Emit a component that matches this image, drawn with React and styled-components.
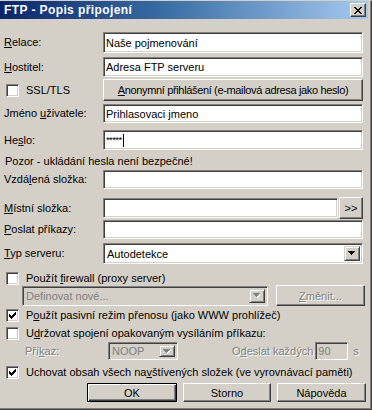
import React from "react";
import styled, { createGlobalStyle, css } from "styled-components";

const GlobalStyle = createGlobalStyle`
  html, body {
    margin: 0;
    padding: 0;
    background: #d4d0c8;
  }
  body {
    font-family: "Liberation Sans", Arial, sans-serif;
    font-size: 11px;
    color: #000;
  }
`;

const Window = styled.div`
  width: 372px;
  height: 410px;
  box-sizing: border-box;
  background: #d4d0c8;
  border-top: 1px solid #d4d0c8;
  border-right: 1px solid #404040;
  border-bottom: 1px solid #404040;
  box-shadow: inset -1px -1px #808080;
  padding-right: 2px;
  display: flex;
  flex-direction: column;
  overflow: hidden;
`;

const TitleBar = styled.div`
  height: 18px;
  margin-right: 1px;
  display: flex;
  align-items: center;
  justify-content: space-between;
  padding: 0 2px 0 4px;
  background: linear-gradient(to right, #0a246a 0%, #3a6ea5 45%, #a6caf0 100%);
`;

const TitleText = styled.span`
  color: #fff;
  font-weight: bold;
  font-size: 12px;
  letter-spacing: 0.4px;
`;

const CloseButton = styled.div`
  width: 16px;
  height: 14px;
  box-sizing: border-box;
  background: #d4d0c8;
  border: 1px solid;
  border-color: #fff #404040 #404040 #fff;
  box-shadow: inset -1px -1px #808080;
  display: flex;
  align-items: center;
  justify-content: center;
`;

const Body = styled.div`
  padding: 13px 6px 0 4px;
  display: flex;
  flex-direction: column;
`;

const FieldRow = styled.div`
  display: grid;
  grid-template-columns: 99px 1fr;
  align-items: center;
  height: ${(p) => p.$h}px;
  margin-top: ${(p) => p.$mt}px;
`;

const Label = styled.span`
  line-height: 13px;
  white-space: nowrap;
  ${(p) =>
    p.$disabled &&
    css`
      color: #808080;
      text-shadow: 1px 1px #fff;
    `}
`;

const Acc = styled.span`
  text-decoration: underline;
  text-underline-offset: 1px;
`;

const TextBox = styled.div`
  height: ${(p) => p.$h || 20}px;
  width: ${(p) => (p.$w ? `${p.$w}px` : "auto")};
  box-sizing: border-box;
  background: ${(p) => (p.$disabled ? "#d4d0c8" : "#fff")};
  color: ${(p) => (p.$disabled ? "#808080" : "#000")};
  border: 1px solid;
  border-color: #808080 #fff #fff #808080;
  box-shadow: inset 1px 1px #404040, inset -1px -1px #d4d0c8;
  padding: 0 2px;
  display: flex;
  align-items: center;
  white-space: nowrap;
  overflow: hidden;
  flex: ${(p) => (p.$grow ? 1 : "none")};
`;

const Stars = styled.span`
  font-size: 9.5px;
  letter-spacing: -0.6px;
  margin-top: -2px;
`;

const Caret = styled.span`
  display: inline-block;
  width: 1px;
  height: 13px;
  background: #000;
  margin-left: 1px;
`;

const WinButton = styled.div`
  height: ${(p) => p.$h || 19}px;
  width: ${(p) => (p.$w ? `${p.$w}px` : "auto")};
  box-sizing: border-box;
  background: #d4d0c8;
  display: flex;
  align-items: center;
  justify-content: center;
  white-space: nowrap;
  border: 1px solid;
  border-color: #fff #404040 #404040 #fff;
  box-shadow: inset -1px -1px #808080;
  color: ${(p) => (p.$disabled ? "#808080" : "#000")};
  text-shadow: ${(p) => (p.$disabled ? "1px 1px #fff" : "none")};
  ${(p) =>
    p.$default &&
    css`
      border-color: #000;
      box-shadow: inset 1px 1px #fff, inset -1px -1px #404040,
        inset -2px -2px #808080;
    `}
`;

const AnonText = styled.span`
  letter-spacing: -0.35px;
`;

const CheckRow = styled.label`
  display: flex;
  align-items: center;
  gap: 7px;
  height: ${(p) => p.$h || 14}px;
  margin-top: ${(p) => p.$mt}px;
  padding-left: 2px;
  white-space: nowrap;
  line-height: 13px;
`;

const Box = styled.span`
  width: 13px;
  height: 13px;
  box-sizing: border-box;
  flex: none;
  background: #fff;
  border: 1px solid;
  border-color: #808080 #fff #fff #808080;
  box-shadow: inset 1px 1px #404040, inset -1px -1px #d4d0c8;
  display: flex;
  align-items: center;
  justify-content: center;
`;

const SslCell = styled.div`
  display: flex;
  align-items: center;
  gap: 7px;
  padding-left: 2px;
`;

const Combo = styled.div`
  height: ${(p) => p.$h || 21}px;
  width: ${(p) => (p.$w ? `${p.$w}px` : "auto")};
  box-sizing: border-box;
  background: ${(p) => (p.$disabled ? "#d4d0c8" : "#fff")};
  color: ${(p) => (p.$disabled ? "#808080" : "#000")};
  border: 1px solid;
  border-color: #808080 #fff #fff #808080;
  box-shadow: inset 1px 1px #404040, inset -1px -1px #d4d0c8;
  padding: 2px;
  display: flex;
  align-items: stretch;
  flex: none;
`;

const ComboText = styled.span`
  flex: 1;
  display: flex;
  align-items: center;
  padding-left: 1px;
  white-space: nowrap;
`;

const DropButton = styled.span`
  width: 16px;
  box-sizing: border-box;
  background: #d4d0c8;
  border: 1px solid;
  border-color: #d4d0c8 #404040 #404040 #d4d0c8;
  box-shadow: inset 1px 1px #fff, inset -1px -1px #808080;
  display: flex;
  align-items: center;
  justify-content: center;
`;

const Notice = styled.div`
  height: 14px;
  margin-top: 4px;
  line-height: 14px;
  padding-left: 1px;
`;

const InlineField = styled.div`
  display: flex;
  align-items: center;
  gap: 1px;
`;

const ProxyRow = styled.div`
  display: flex;
  align-items: center;
  height: 21px;
  padding-left: 18px;
  margin-right: -3px;
  gap: 8px;
`;

const KeepRow = styled.div`
  display: flex;
  align-items: center;
  height: 18px;
  margin-top: 2px;
  padding-left: 21px;
`;

const KeepLabel = styled(Label)`
  width: 83px;
  flex: none;
`;

const Spacer = styled.span`
  width: ${(p) => p.$w}px;
  flex: none;
`;

const ButtonBar = styled.div`
  display: flex;
  justify-content: flex-end;
  gap: 6px;
  margin-top: 4px;
  margin-right: -3px;
`;

const CheckMark = () => (
  <svg width="7" height="7" viewBox="0 0 7 7" shapeRendering="crispEdges">
    <path
      d="M6 0h1v1h-1zM5 1h2v1h-2zM0 2h1v1h-1zM4 2h3v1h-3zM0 3h2v1h-2zM3 3h3v1h-3zM0 4h5v1h-5zM1 5h3v1h-3zM2 6h1v1h-1z"
      fill="#000"
    />
  </svg>
);

const Arrow = ({ disabled }) => (
  <svg width="8" height="5" viewBox="0 0 8 5" shapeRendering="crispEdges">
    {disabled && (
      <path d="M1 1h7v1h-7zM2 2h5v1h-5zM3 3h3v1h-3zM4 4h1v1h-1z" fill="#fff" />
    )}
    <path
      d="M0 0h7v1h-7zM1 1h5v1h-5zM2 2h3v1h-3zM3 3h1v1h-1z"
      fill={disabled ? "#808080" : "#000"}
    />
  </svg>
);

const CloseGlyph = () => (
  <svg width="8" height="7" viewBox="0 0 8 7" shapeRendering="crispEdges">
    <path
      d="M0 0h2v1h-2zM6 0h2v1h-2zM1 1h2v1h-2zM5 1h2v1h-2zM2 2h4v1h-4zM3 3h2v1h-2zM2 4h4v1h-4zM1 5h2v1h-2zM5 5h2v1h-2zM0 6h2v1h-2zM6 6h2v1h-2z"
      fill="#000"
    />
  </svg>
);

const Check = ({ checked }) => <Box>{checked && <CheckMark />}</Box>;

export default function App() {
  return (
    <>
      <GlobalStyle />
      <Window>
        <TitleBar>
          <TitleText>FTP - Popis připojení</TitleText>
          <CloseButton>
            <CloseGlyph />
          </CloseButton>
        </TitleBar>

        <Body>
          <FieldRow $h={21} $mt={0}>
            <Label>
              <Acc>R</Acc>elace:
            </Label>
            <TextBox $h={21}>Naše pojmenování</TextBox>
          </FieldRow>

          <FieldRow $h={20} $mt={4}>
            <Label>
              <Acc>H</Acc>ostitel:
            </Label>
            <TextBox>Adresa FTP serveru</TextBox>
          </FieldRow>

          <FieldRow $h={22} $mt={2}>
            <SslCell>
              <Check />
              <span>SSL/TLS</span>
            </SslCell>
            <WinButton $h={22}>
              <AnonText>
                <Acc>A</Acc>nonymní přihlášení (e-mailová adresa jako heslo)
              </AnonText>
            </WinButton>
          </FieldRow>

          <FieldRow $h={19} $mt={3}>
            <Label>
              Jméno <Acc>u</Acc>živatele:
            </Label>
            <TextBox $h={19}>Prihlasovaci jmeno</TextBox>
          </FieldRow>

          <FieldRow $h={20} $mt={7}>
            <Label>
              He<Acc>s</Acc>lo:
            </Label>
            <TextBox>
              <Stars>*****</Stars>
              <Caret />
            </TextBox>
          </FieldRow>

          <Notice>Pozor - ukládání hesla není bezpečné!</Notice>

          <FieldRow $h={19} $mt={2}>
            <Label>
              Vzdá<Acc>l</Acc>ená složka:
            </Label>
            <TextBox $h={19} />
          </FieldRow>

          <FieldRow $h={20} $mt={8}>
            <Label>
              <Acc>M</Acc>ístní složka:
            </Label>
            <InlineField>
              <TextBox $grow />
              <WinButton $w={24} $h={22}>
                &gt;&gt;
              </WinButton>
            </InlineField>
          </FieldRow>

          <FieldRow $h={19} $mt={3}>
            <Label>
              <Acc>P</Acc>oslat příkazy:
            </Label>
            <TextBox $h={19} />
          </FieldRow>

          <FieldRow $h={21} $mt={4}>
            <Label>
              <Acc>T</Acc>yp serveru:
            </Label>
            <Combo>
              <ComboText>Autodetekce</ComboText>
              <DropButton>
                <Arrow />
              </DropButton>
            </Combo>
          </FieldRow>

          <CheckRow $mt={7}>
            <Check />
            <span>
              Použít <Acc>f</Acc>irewall (proxy server)
            </span>
          </CheckRow>

          <ProxyRow>
            <Combo $w={246} $h={20} $disabled>
              <ComboText>Definovat nové...</ComboText>
              <DropButton>
                <Arrow disabled />
              </DropButton>
            </Combo>
            <WinButton $w={89} $h={21} $disabled>
              <span>
                <Acc>Z</Acc>měnit...
              </span>
            </WinButton>
          </ProxyRow>

          <CheckRow $mt={2}>
            <Check checked />
            <span>
              P<Acc>o</Acc>užít pasivní režim přenosu (jako WWW prohlížeč)
            </span>
          </CheckRow>

          <CheckRow $mt={4}>
            <Check />
            <span>
              U<Acc>d</Acc>ržovat spojení opakovaným vysíláním příkazu:
            </span>
          </CheckRow>

          <KeepRow>
            <KeepLabel $disabled>
              Pří<Acc>k</Acc>az:
            </KeepLabel>
            <Combo $w={70} $h={18} $disabled>
              <ComboText>NOOP</ComboText>
              <DropButton>
                <Arrow disabled />
              </DropButton>
            </Combo>
            <Spacer $w={54} />
            <Label $disabled>
              O<Acc>d</Acc>eslat každých
            </Label>
            <Spacer $w={2} />
            <TextBox $w={33} $h={18} $disabled>
              90
            </TextBox>
            <Spacer $w={5} />
            <Label $disabled>s</Label>
          </KeepRow>

          <CheckRow $mt={5}>
            <Check checked />
            <span>
              Uchovat obsah všech na<Acc>v</Acc>štívených složek (ve vyrovnávací
              paměti)
            </span>
          </CheckRow>

          <ButtonBar>
            <WinButton $w={90} $default>
              OK
            </WinButton>
            <WinButton $w={88}>Storno</WinButton>
            <WinButton $w={89}>Nápověda</WinButton>
          </ButtonBar>
        </Body>
      </Window>
    </>
  );
}
